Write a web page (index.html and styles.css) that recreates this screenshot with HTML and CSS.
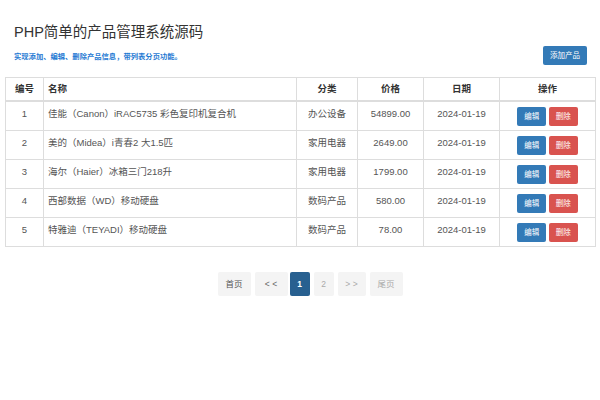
FILE: index.html
```html
<!DOCTYPE html>
<html lang="zh-CN">
<head>
<meta charset="utf-8">
<title>PHP简单的产品管理系统源码</title>
<link rel="stylesheet" href="styles.css">
</head>
<body>
<div class="wrap">
  <h1 class="title">PHP简单的产品管理系统源码</h1>
  <div class="bar">
    <p class="desc">实现添加、编辑、删除产品信息，带列表分页功能。</p>
    <a class="btn btn-add">添加产品</a>
  </div>
  <table class="grid">
    <colgroup>
      <col class="c-id"><col class="c-name"><col class="c-cat"><col class="c-price"><col class="c-date"><col class="c-op">
    </colgroup>
    <thead>
      <tr><th>编号</th><th class="left">名称</th><th>分类</th><th>价格</th><th>日期</th><th>操作</th></tr>
    </thead>
    <tbody>
      <tr><td>1</td><td class="left">佳能（Canon）iRAC5735 彩色复印机复合机</td><td>办公设备</td><td>54899.00</td><td>2024-01-19</td><td><a class="btn btn-edit">编辑</a> <a class="btn btn-del">删除</a></td></tr>
      <tr><td>2</td><td class="left">美的（Midea）i青春2 大1.5匹</td><td>家用电器</td><td>2649.00</td><td>2024-01-19</td><td><a class="btn btn-edit">编辑</a> <a class="btn btn-del">删除</a></td></tr>
      <tr><td>3</td><td class="left">海尔（Haier）冰箱三门218升</td><td>家用电器</td><td>1799.00</td><td>2024-01-19</td><td><a class="btn btn-edit">编辑</a> <a class="btn btn-del">删除</a></td></tr>
      <tr><td>4</td><td class="left">西部数据（WD）移动硬盘</td><td>数码产品</td><td>580.00</td><td>2024-01-19</td><td><a class="btn btn-edit">编辑</a> <a class="btn btn-del">删除</a></td></tr>
      <tr><td>5</td><td class="left">特雅迪（TEYADI）移动硬盘</td><td>数码产品</td><td>78.00</td><td>2024-01-19</td><td><a class="btn btn-edit">编辑</a> <a class="btn btn-del">删除</a></td></tr>
    </tbody>
  </table>
  <div class="pager">
    <a class="pg pg-dark">首页</a>
    <a class="pg pg-mid">&lt; &lt;</a>
    <a class="pg pg-num active">1</a>
    <a class="pg pg-num pg-light">2</a>
    <a class="pg pg-light pg-next">&gt; &gt;</a>
    <a class="pg pg-light">尾页</a>
  </div>
</div>
</body>
</html>
```

FILE: styles.css
```css
html, body {
  margin: 0;
  padding: 0;
  background: #fff;
}
body {
  font-family: "Liberation Sans", "Noto Sans CJK SC", sans-serif;
  color: #555;
}
.wrap {
  padding: 0 5px;
}
.title {
  margin: 0;
  padding: 22px 0 0 9px;
  font-size: 14.5px;
  line-height: 20px;
  font-weight: normal;
  color: #333;
}
.bar {
  display: flex;
  justify-content: space-between;
  align-items: center;
  padding: 0 8px 0 9px;
  margin-top: 4px;
}
.desc {
  margin: 0;
  font-size: 7.3px;
  font-weight: bold;
  color: #1f7ad3;
}
.btn {
  display: inline-block;
  box-sizing: border-box;
  height: 19px;
  line-height: 19px;
  border-radius: 2px;
  color: #fff;
  font-size: 7.5px;
  text-align: center;
  vertical-align: top;
}
.btn-add {
  width: 44px;
  background: #337ab7;
}
.btn-edit {
  width: 29px;
  background: #337ab7;
}
.btn-del {
  width: 29px;
  background: #d9534f;
}
.grid {
  margin-top: 12px;
  width: 590px;
  border-collapse: collapse;
  table-layout: fixed;
  border: 1px solid #ddd;
  font-size: 9.5px;
  line-height: 13.5px;
}
.c-id { width: 38px; }
.c-name { width: 253px; }
.c-cat { width: 61px; }
.c-price { width: 66px; }
.c-date { width: 76px; }
.c-op { width: 96px; }
.grid th, .grid td {
  border: 1px solid #ddd;
  text-align: center;
  vertical-align: top;
  padding: 5px 4px 4px;
  white-space: nowrap;
}
.grid th {
  color: #333;
  font-weight: bold;
  padding: 4px 4px 4px;
  border-bottom: 2px solid #ddd;
}
.grid .left {
  text-align: left;
}
.pager {
  display: flex;
  justify-content: center;
  gap: 4px;
  margin-top: 25px;
  padding-left: 20px;
}
.pg {
  display: block;
  box-sizing: border-box;
  width: 33px;
  height: 24px;
  line-height: 24px;
  text-align: center;
  font-size: 8.5px;
  background: #f4f4f4;
  border-radius: 2px;
  color: #555;
}
.pg-num { width: 20px; }
.pg-next { width: 28px; }
.pg-mid { color: #666; }
.pg-light { color: #aaa; }
.pg.active {
  background: #286090;
  color: #fff;
  font-weight: bold;
  margin-left: -2px;
}
```
